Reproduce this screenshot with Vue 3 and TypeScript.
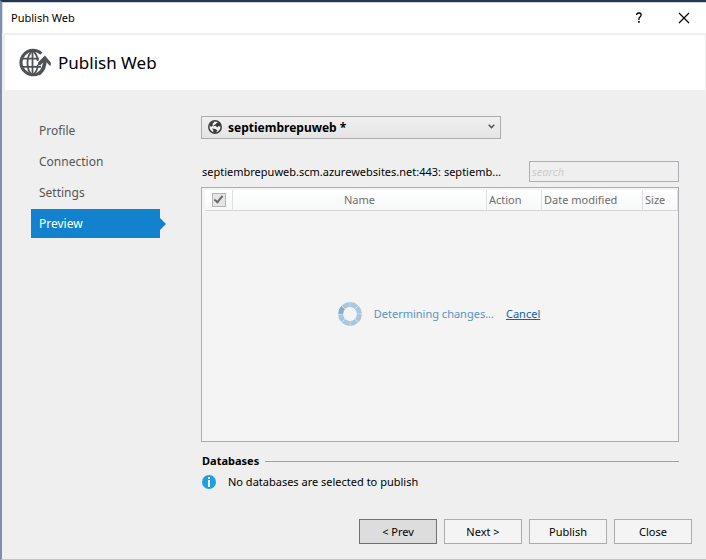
<script setup lang="ts">
import { ref } from 'vue'

interface Step {
  id: string
  label: string
}

const steps: Step[] = [
  { id: 'profile', label: 'Profile' },
  { id: 'connection', label: 'Connection' },
  { id: 'settings', label: 'Settings' },
  { id: 'preview', label: 'Preview' },
]

const current = ref('preview')
const profile = ref('septiembrepuweb')
const search = ref('')
const allSelected = ref(true)
const segments: number[] = [0, 45, 90, 135, 180, 225, 270, 315]
</script>

<template>
  <div class="window">
    <header class="titlebar">
      <span class="caption">Publish Web</span>
      <button class="caption-button" type="button" aria-label="Help">
        <svg width="8" height="12" viewBox="0 0 8 12" aria-hidden="true">
          <path d="M1.7 3V2.2Q2.5 1 4.1 1Q6.1 1 6.1 2.9Q6.1 4 5 4.9Q3.9 5.8 3.9 7.2V8" fill="none" stroke="#000" stroke-width="1.3" />
          <rect x="3.1" y="9" width="1.6" height="1.8" fill="#000" />
        </svg>
      </button>
      <button class="caption-button" type="button" aria-label="Close window">
        <svg width="12" height="12" viewBox="0 0 12 12" aria-hidden="true">
          <path d="M1 1L11 11M11 1L1 11" fill="none" stroke="#000" stroke-width="1.2" />
        </svg>
      </button>
    </header>

    <div class="banner">
      <svg class="logo" width="34" height="30" viewBox="0 0 34 30" aria-hidden="true">
        <g fill="none" stroke="#505355">
          <path d="M23.4 5.6A12.2 12.2 0 1 0 22.6 24.2" stroke-width="3" />
          <path d="M20.6 26Q27.4 21 26.8 11" stroke-width="3.6" />
          <path d="M14.5 2.5C7.8 8 7.8 22 14.5 27.5M14.5 2.5C17.9 5.2 19.5 9 19.7 13M14.5 27.5C18.1 24.8 19.7 20.6 19.8 16.8" stroke-width="1.8" />
          <path d="M14.5 2V28M3.5 10.6H21M3 18.8H23" stroke-width="1.8" />
        </g>
        <path d="M20 14.6L26.9 7.4L32.8 14.6V17.4H31.6L26.8 12.4L22.4 17.2H20Z" fill="#505355" />
      </svg>
      <h1>Publish Web</h1>
    </div>

    <div class="body">
      <nav class="steps" aria-label="Publish steps">
        <a
          v-for="step in steps"
          :key="step.id"
          class="step"
          :class="{ active: step.id === current }"
          :href="'#' + step.id"
          @click.prevent="current = step.id"
        >{{ step.label }}</a>
      </nav>

      <main class="content">
        <div class="profile">
          <svg class="globe" width="14" height="14" viewBox="0 0 14 14" aria-hidden="true">
            <circle cx="7" cy="7" r="6.2" fill="#f4f4f4" stroke="#3c3c3c" stroke-width="1.5" />
            <path d="M1.4 4.4L4.6 1.4L6.4 1.2L5.8 2.8L4.2 4L5.2 5L3.6 6.8L2.2 6.2Z" fill="#3c3c3c" />
            <path d="M9 2.8L10.8 2.2L12.8 5L12.4 6.8L10.6 6L9.4 7.4L7.4 5.8L5.4 6.6L5.6 5.4L7.4 4.2Z" fill="#3c3c3c" />
            <path d="M4 8.4L7.4 9L9.4 10.6L7.6 13L5 12.2L5.4 10.4Z" fill="#3c3c3c" />
          </svg>
          <select v-model="profile" aria-label="Publish profile">
            <option value="septiembrepuweb">septiembrepuweb *</option>
          </select>
          <svg class="chevron" width="7" height="5" viewBox="0 0 7 5" aria-hidden="true">
            <path d="M.7 .8L3.5 3.6L6.3 .8" fill="none" stroke="#555" stroke-width="1.5" />
          </svg>
        </div>

        <div class="target">
          <label class="path" for="search">septiembrepuweb.scm.azurewebsites.net:443: septiemb...</label>
          <input id="search" v-model="search" class="search" type="text" placeholder="search" />
        </div>

        <section class="panel">
          <table>
            <thead>
              <tr>
                <th class="pick">
                  <input v-model="allSelected" type="checkbox" aria-label="Select all files" />
                </th>
                <th class="name">Name</th>
                <th class="action">Action</th>
                <th class="date">Date modified</th>
                <th class="size">Size</th>
              </tr>
            </thead>
          </table>
          <div class="status" role="status">
            <svg class="spinner" width="24" height="24" viewBox="0 0 24 24" aria-hidden="true">
              <path
                v-for="angle in segments"
                :key="angle"
                d="M8.6 3.2A9.6 9.6 0 0 1 15.4 3.2"
                fill="none"
                :stroke="angle === 270 ? '#82afd0' : '#a9c6dc'"
                stroke-width="5"
                :transform="`rotate(${angle + 22} 12 12)`"
              />
            </svg>
            <span>Determining changes...</span>
            <a href="#cancel" class="cancel" @click.prevent>Cancel</a>
          </div>
        </section>

        <section class="databases">
          <h2>Databases</h2>
          <p>
            <svg width="14" height="14" viewBox="0 0 14 14" aria-hidden="true">
              <circle cx="7" cy="7" r="7" fill="#1ba1e2" />
              <path d="M6 2H8V4H6ZM6 5H8V12H6Z" fill="#fff" />
            </svg>
            No databases are selected to publish
          </p>
        </section>
      </main>
    </div>

    <footer class="actions">
      <button class="action-button prev" type="button">&lt; Prev</button>
      <button class="action-button" type="button">Next &gt;</button>
      <button class="action-button" type="button">Publish</button>
      <button class="action-button" type="button">Close</button>
    </footer>
  </div>
</template>

<style>
body {
  margin: 0;
  background: #efefef;
}
</style>

<style scoped>
.window {
  box-sizing: border-box;
  display: flex;
  flex-direction: column;
  min-height: 100vh;
  border-top: 2px solid #293450;
  border-left: 2px solid #7d8fae;
  border-bottom: 1px solid #bcc6d6;
  background: #efefef;
  color: #000;
  font: 11px/16px "Segoe UI", "Noto Sans", sans-serif;
}

button,
input,
select {
  font: inherit;
  color: inherit;
}

.titlebar {
  display: flex;
  align-items: center;
  height: 30px;
  padding: 0 4px 0 8px;
  border-top: 1px solid #c9d3e3;
  border-left: 1px solid #d3dded;
  background: #fff;
}

.caption {
  flex: 1;
}

.caption-button {
  display: grid;
  place-items: center;
  width: 54px;
  height: 29px;
  padding: 0;
  border: 0;
  background: none;
}

.caption-button:last-child {
  width: 36px;
}

.banner {
  display: flex;
  align-items: center;
  gap: 6px;
  height: 55px;
  margin: 2px 1px 0 3px;
  padding-left: 13px;
  background: #fff;
}

h1 {
  margin: 0;
  font-size: 17px;
  line-height: 24px;
  font-weight: 400;
}

.body {
  flex: 1;
  display: flex;
  gap: 41px;
  padding: 26px 27px 0 29px;
}

.steps {
  display: flex;
  flex-direction: column;
  gap: 2px;
  width: 129px;
  flex: none;
  font-size: 12px;
}

.step {
  position: relative;
  padding: 0 8px;
  line-height: 29px;
  color: #555;
  text-decoration: none;
}

.step.active {
  background: #1382ce;
  color: #fff;
}

.step.active::after {
  content: "";
  position: absolute;
  left: 100%;
  top: 9px;
  border: 6px solid transparent;
  border-left-color: #1382ce;
  border-right: 0;
}

.content {
  flex: 1;
  min-width: 0;
  display: flex;
  flex-direction: column;
}

.profile {
  position: relative;
  width: 300px;
  max-width: 100%;
}

.profile select {
  display: block;
  box-sizing: border-box;
  appearance: none;
  width: 100%;
  height: 23px;
  padding: 0 24px 0 26px;
  border: 1px solid #acacac;
  border-radius: 0;
  background: linear-gradient(#f0f0f0, #e4e4e4);
  font-size: 12px;
  font-weight: 700;
}

.globe {
  position: absolute;
  left: 7px;
  top: 4px;
}

.chevron {
  position: absolute;
  right: 6px;
  top: 8px;
}

.target {
  display: flex;
  align-items: center;
  gap: 24px;
  margin-top: 22px;
}

.path {
  flex: 1;
  min-width: 0;
  padding-left: 1px;
  white-space: nowrap;
}

.search {
  box-sizing: border-box;
  width: 150px;
  height: 21px;
  padding: 0 2px;
  border: 1px solid #abadb3;
  border-radius: 0;
  background: #efefef;
}

.search::placeholder {
  color: #ccc;
  font-style: italic;
  opacity: 1;
}

.panel {
  position: relative;
  flex: 1;
  margin-top: 5px;
  padding: 2px 0 0 3px;
  border: 1px solid #abadb3;
  background: #f4f4f4;
}

table {
  width: 100%;
  table-layout: fixed;
  border-collapse: separate;
  border-spacing: 0;
}

th {
  box-sizing: border-box;
  height: 21px;
  padding: 0 2px;
  border-right: 1px solid #dedfe1;
  border-bottom: 1px solid #d5d5d5;
  background: linear-gradient(#fff, #f7f8f9);
  color: #6d6d6d;
  font-weight: 400;
  text-align: left;
  white-space: nowrap;
}

th.pick {
  width: 28px;
  padding: 0;
  text-align: center;
}

th.name {
  text-align: center;
}

th.action {
  width: 55px;
}

th.date {
  width: 101px;
}

th.size {
  width: 35px;
}

th input {
  appearance: none;
  display: block;
  box-sizing: border-box;
  width: 14px;
  height: 14px;
  margin: 0 auto;
  border: 1px solid #b4b4b4;
  background: #e6e6e6;
}

th input:checked::before {
  content: "";
  display: block;
  box-sizing: border-box;
  width: 5px;
  height: 9px;
  margin: 0 auto;
  border: solid #6a6a6a;
  border-width: 0 2px 2px 0;
  transform: rotate(40deg);
}

.status {
  position: absolute;
  inset: 0 2px 2px 0;
  display: flex;
  align-items: center;
  justify-content: center;
  color: #5c93bd;
}

.spinner {
  margin-right: 12px;
}

.cancel {
  margin-left: 12px;
  color: #0f62ae;
}

.databases {
  margin-top: 11px;
}

h2 {
  display: flex;
  align-items: center;
  gap: 6px;
  margin: 0;
  padding-left: 1px;
  font-size: 11px;
  line-height: 16px;
}

h2::after {
  content: "";
  flex: 1;
  height: 1px;
  background: #a0a0a0;
}

.databases p {
  display: flex;
  align-items: center;
  gap: 12px;
  margin: 5px 0 0 1px;
}

.actions {
  display: flex;
  justify-content: flex-end;
  gap: 7px;
  padding: 29px 14px 15px;
}

.action-button {
  width: 78px;
  height: 25px;
  padding: 0;
  border: 1px solid #acacac;
  background: #f4f4f4;
}

.action-button.prev {
  border-color: #707070;
  background: #ddd;
}
</style>
